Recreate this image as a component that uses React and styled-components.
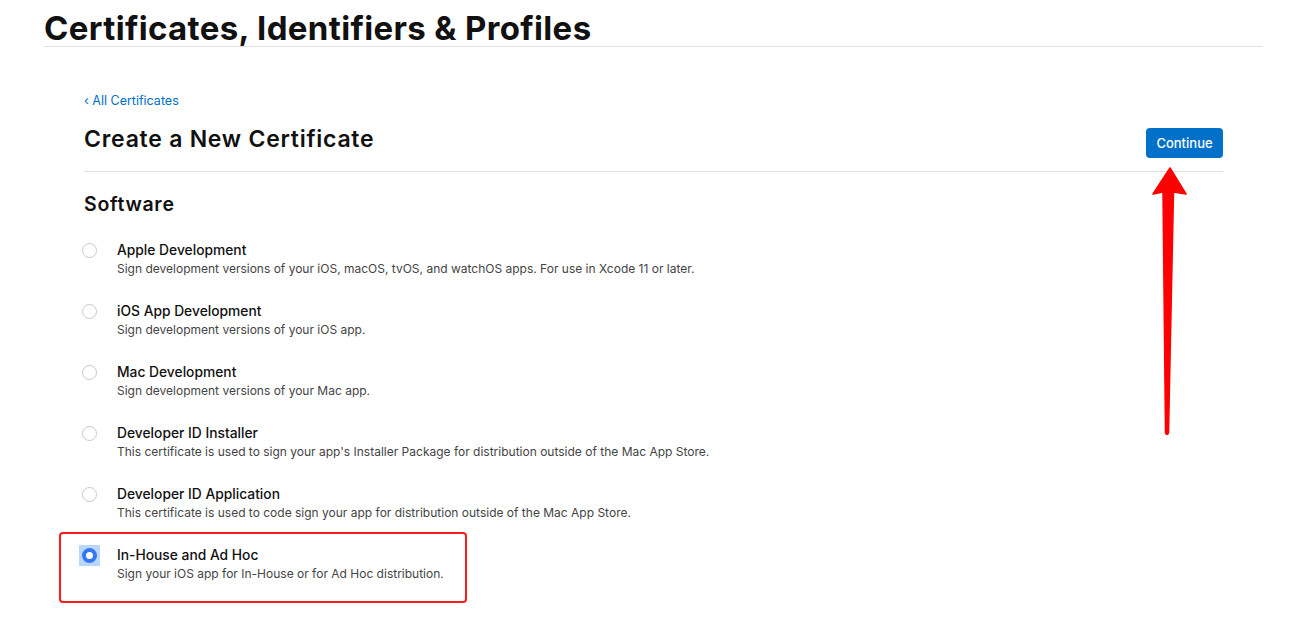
import React from "react";
import styled, { createGlobalStyle } from "styled-components";

const Global = createGlobalStyle`
  html, body { margin: 0; padding: 0; background: #fff; }
  body { font-family: Inter, "Noto Sans", "Liberation Sans", sans-serif; color: #111; }
`;

const Page = styled.div`
  position: relative;
  width: 1299px;
  height: 625px;
  overflow: hidden;
  padding: 0 36px 0 44px;
  box-sizing: border-box;
`;

const Header = styled.h1`
  margin: 0;
  padding-top: 8px;
  height: 47px;
  box-sizing: border-box;
  font-size: 33px;
  line-height: 40px;
  font-weight: 700;
  letter-spacing: 0.35px;
  color: #111;
  border-bottom: 1px solid #e2e2e2;
`;

const Main = styled.main`
  padding: 0 40px;
`;

const BackLink = styled.a`
  display: inline-block;
  margin-top: 46px;
  font-size: 12.5px;
  line-height: 16px;
  color: #0070c9;
  text-decoration: none;
`;

const TitleRow = styled.div`
  display: flex;
  align-items: flex-start;
  justify-content: space-between;
  margin-top: 15px;
  padding-bottom: 12.6px;
  border-bottom: 1px solid #e0e0e0;
`;

const PageTitle = styled.h2`
  margin: 0;
  font-size: 23px;
  line-height: 30px;
  font-weight: 600;
  letter-spacing: 0.75px;
  color: #111;
`;

const Button = styled.button`
  margin-top: 4px;
  width: 77px;
  height: 30px;
  border: none;
  border-radius: 4px;
  background: #0070c9;
  color: #fff;
  font-family: inherit;
  font-size: 13px;
  font-weight: 500;
  cursor: pointer;
`;

const SectionTitle = styled.h3`
  margin: 20.5px 0 25px;
  font-size: 19.5px;
  line-height: 24px;
  font-weight: 600;
  letter-spacing: 0.7px;
  color: #111;
`;

const OptionList = styled.div`
  display: flex;
  flex-direction: column;
  gap: 25px;
`;

const Option = styled.label`
  position: relative;
  display: flex;
  align-items: flex-start;
  gap: 20px;
  ${(p) =>
    p.$annotated &&
    `
    &::after {
      content: "";
      position: absolute;
      left: -25px;
      top: -14px;
      width: 408px;
      height: 71px;
      border: 2px solid #ff1a1a;
      border-radius: 4px;
      box-sizing: border-box;
    }
  `}
`;

const RadioWrap = styled.span`
  flex: none;
  width: 15px;
  height: 15px;
  margin-top: 2px;
  margin-left: -2px;
  display: flex;
  align-items: center;
  justify-content: center;
  position: relative;
  ${(p) =>
    p.$checked &&
    `
    &::before {
      content: "";
      position: absolute;
      left: -3px; top: -3px; right: -3px; bottom: -3px;
      background: #b9d6fb;
    }
  `}
`;

const Radio = styled.span`
  position: relative;
  box-sizing: border-box;
  width: 15px;
  height: 15px;
  border-radius: 50%;
  border: ${(p) => (p.$checked ? "4.5px solid #3478f6" : "1px solid #c9c9c9")};
  background: #fff;
`;

const Texts = styled.span`
  display: flex;
  flex-direction: column;
`;

const OptionTitle = styled.span`
  font-size: 13.8px;
  line-height: 19px;
  font-weight: 500;
  color: #111;
`;

const OptionDesc = styled.span`
  font-size: 12px;
  line-height: 17px;
  color: #444;
`;

const ArrowSvg = styled.svg`
  position: absolute;
  left: 1148px;
  top: 165px;
`;

const options = [
  ["Apple Development", "Sign development versions of your iOS, macOS, tvOS, and watchOS apps. For use in Xcode 11 or later."],
  ["iOS App Development", "Sign development versions of your iOS app."],
  ["Mac Development", "Sign development versions of your Mac app."],
  ["Developer ID Installer", "This certificate is used to sign your app's Installer Package for distribution outside of the Mac App Store."],
  ["Developer ID Application", "This certificate is used to code sign your app for distribution outside of the Mac App Store."],
  ["In-House and Ad Hoc", "Sign your iOS app for In-House or for Ad Hoc distribution."],
];

export default function App() {
  return (
    <>
      <Global />
      <Page>
        <Header>Certificates, Identifiers &amp; Profiles</Header>
        <Main>
          <BackLink href="#">‹ All Certificates</BackLink>
          <TitleRow>
            <PageTitle>Create a New Certificate</PageTitle>
            <Button>Continue</Button>
          </TitleRow>
          <SectionTitle>Software</SectionTitle>
          <OptionList>
            {options.map(([t, d], i) => {
              const checked = i === 5;
              return (
                <Option key={t} $annotated={checked}>
                  <RadioWrap $checked={checked}>
                    <Radio $checked={checked} />
                  </RadioWrap>
                  <Texts>
                    <OptionTitle>{t}</OptionTitle>
                    <OptionDesc>{d}</OptionDesc>
                  </Texts>
                </Option>
              );
            })}
          </OptionList>
        </Main>
        <ArrowSvg width="44" height="280" viewBox="0 0 44 280">
          <path d="M22 3 L38 29 L25.5 27 L20.5 268 Q19 271 17.5 268 L15 27 L5 29 Z" fill="#ff0000" stroke="#ff0000" strokeWidth="1.5" strokeLinejoin="round" />
        </ArrowSvg>
      </Page>
    </>
  );
}
